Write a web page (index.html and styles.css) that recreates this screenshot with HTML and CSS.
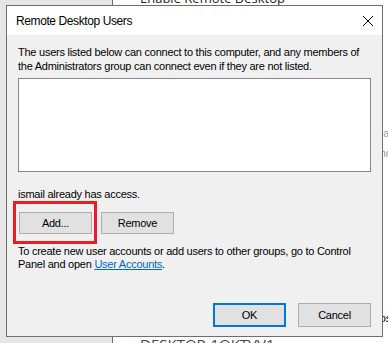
FILE: index.html
```html
<!DOCTYPE html>
<html lang="en">
<head>
    <meta charset="UTF-8">
    <meta name="viewport" content="width=device-width, initial-scale=1.0">
    <title>Remote Desktop Users</title>
    <link rel="stylesheet" href="styles.css">
</head>
<body>
    <div class="desktop">
        <aside class="nav-pane"></aside>
        <main class="settings">
            <h2 class="settings-title">Enable Remote Desktop</h2>
            <p class="settings-line muted first">Remote Desktop lets you connect to this PC from a device</p>
            <p class="settings-line muted">using a Remote Desktop client and access files and apps.</p>
            <p class="settings-line dark">User accounts and permission settings can be chosen here now</p>
            <p class="host">DESKTOP-1OKTVV1</p>
        </main>

        <div class="dialog">
            <div class="titlebar">
                <span class="title">Remote Desktop Users</span>
                <svg class="close" width="10" height="10" viewBox="0 0 10 10" fill="none" stroke="#000" stroke-width="1">
                    <line x1="0" y1="0" x2="10" y2="10"></line>
                    <line x1="10" y1="0" x2="0" y2="10"></line>
                </svg>
            </div>
            <div class="dialog-body">
                <p class="desc">The users listed below can connect to this computer, and any members of the Administrators group can connect even if they are not listed.</p>
                <div class="user-list"></div>
                <p class="access">ismail already has access.</p>
                <div class="list-actions">
                    <span class="highlight">
                        <button class="btn">Add...</button>
                    </span>
                    <button class="btn">Remove</button>
                </div>
                <p class="info">To create new user accounts or add users to other groups, go to Control Panel and open <a href="#" class="link">User Accounts</a>.</p>
                <div class="footer">
                    <button class="btn btn-default">OK</button>
                    <button class="btn">Cancel</button>
                </div>
            </div>
        </div>
    </div>
</body>
</html>
```

FILE: styles.css
```css
* {
    margin: 0;
    padding: 0;
    box-sizing: border-box;
}

body {
    width: 388px;
    height: 343px;
    overflow: hidden;
    font-family: 'Liberation Sans', Arial, sans-serif;
    font-size: 11px;
    color: #000;
}

.desktop {
    position: relative;
    display: flex;
    width: 388px;
    height: 343px;
    overflow: hidden;
}

.nav-pane {
    flex-shrink: 0;
    width: 113px;
    background-color: #e6e6e6;
    border-right: 1px solid #6d6d6d;
}

.settings {
    flex: 1;
    min-width: 0;
    background-color: #fff;
    padding-left: 27px;
}

.settings-title {
    margin-top: -11px;
    font-family: 'Open Sans', sans-serif;
    font-size: 13px;
    font-weight: 400;
    color: #222;
    white-space: nowrap;
}

.settings-line {
    font-size: 11px;
    white-space: nowrap;
    line-height: 20px;
}

.settings-line.muted {
    color: #999;
}

.settings-line.first {
    margin-top: 116px;
}

.settings-line.dark {
    margin-top: 145px;
    color: #000;
}

.host {
    margin-top: 6px;
    font-family: 'Open Sans', sans-serif;
    font-size: 15px;
    color: #444;
    white-space: nowrap;
}

/* dialog window */
.dialog {
    position: absolute;
    left: 6px;
    top: 5px;
    width: 377px;
    height: 332px;
    display: flex;
    flex-direction: column;
    background-color: #f0f0f0;
    border: 1px solid #6e6e6e;
}

.titlebar {
    display: flex;
    align-items: center;
    justify-content: space-between;
    height: 29px;
    padding: 0 9px 0 9px;
    background-color: #fff;
}

.title {
    font-size: 12px;
    letter-spacing: -0.4px;
    color: #000;
}

.dialog-body {
    flex: 1;
    display: flex;
    flex-direction: column;
    padding: 10px 11px 9px 11px;
    letter-spacing: -0.25px;
}

.desc {
    line-height: 14px;
}

.user-list {
    height: 94px;
    margin-top: 5px;
    background-color: #fff;
    border: 1px solid #828790;
}

.access {
    margin-top: 16px;
    line-height: 13px;
}

.list-actions {
    display: flex;
    gap: 9px;
    margin-top: 11px;
    padding-left: 1px;
}

.btn {
    width: 73px;
    height: 22px;
    font-family: 'Liberation Sans', Arial, sans-serif;
    font-size: 11px;
    letter-spacing: -0.25px;
    color: #000;
    background-color: #e1e1e1;
    border: 1px solid #adadad;
}

.highlight {
    position: relative;
    display: flex;
}

.highlight::after {
    content: '';
    position: absolute;
    left: -6px;
    top: -11px;
    right: -5px;
    bottom: -10px;
    border: 3px solid #ec1c24;
}

.info {
    margin-top: 11px;
    line-height: 13px;
}

.link {
    color: #0066cc;
}

.footer {
    display: flex;
    justify-content: flex-end;
    gap: 12px;
    margin-top: auto;
}

.footer .btn {
    height: 24px;
    width: 73px;
}

.btn-default {
    border: 2px solid #0078d7;
}
```
